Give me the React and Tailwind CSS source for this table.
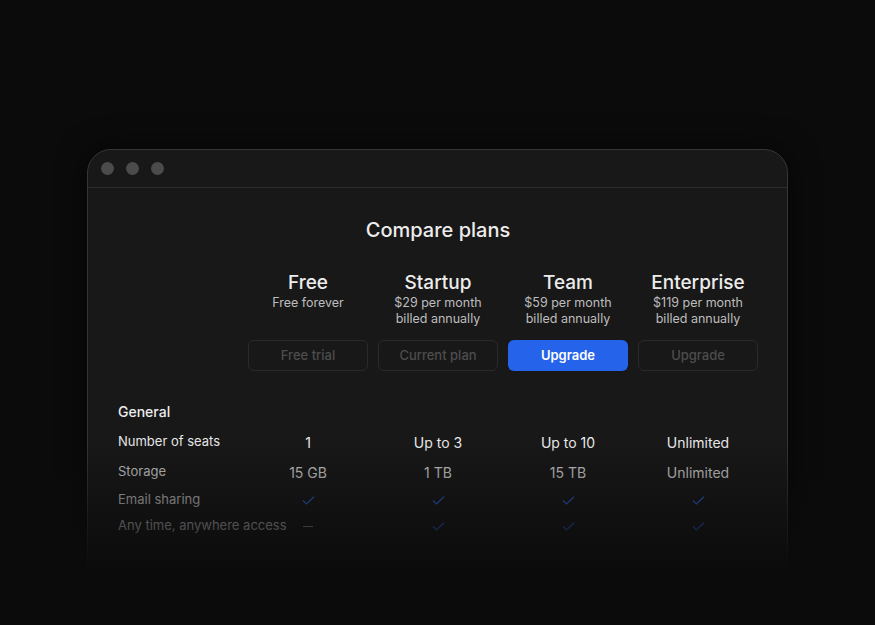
import React from "react";

const plans = [
  { name: "Free", price: "Free forever", billed: "", cta: "Free trial", primary: false },
  { name: "Startup", price: "$29 per month", billed: "billed annually", cta: "Current plan", primary: false },
  { name: "Team", price: "$59 per month", billed: "billed annually", cta: "Upgrade", primary: true },
  { name: "Enterprise", price: "$119 per month", billed: "billed annually", cta: "Upgrade", primary: false },
];

const rows = [
  { label: "Number of seats", values: ["1", "Up to 3", "Up to 10", "Unlimited"], h: "h-[30px]", strong: true },
  { label: "Storage", values: ["15 GB", "1 TB", "15 TB", "Unlimited"], h: "h-[30px]" },
  { label: "Email sharing", values: [true, true, true, true], h: "h-[26px]" },
  { label: "Any time, anywhere access", values: [false, true, true, true], h: "h-[26px]" },
];

function Check() {
  return (
    <svg width="13" height="9" viewBox="0 0 13 9" fill="none">
      <path d="M1 4.5L4.5 8L12 0.8" stroke="#2f63d8" strokeWidth="1.2" />
    </svg>
  );
}

function Cell({ value }) {
  if (value === true) return <Check />;
  if (value === false) return <span className="block w-[10px] h-px bg-[#9a9a9a]" />;
  return value;
}

export default function App() {
  return (
    <div
      className="relative min-h-screen h-[625px] overflow-hidden bg-[#0b0b0b] flex justify-center pt-[149px]"
      style={{ fontFamily: "Inter, 'Noto Sans', sans-serif" }}
    >
      <div className="w-[701px] h-[520px] rounded-t-[24px] border border-[#363636] bg-[#181818] shadow-[0_0_30px_rgba(0,0,0,0.6)]">
        {/* title bar */}
        <div className="h-[38px] border-b border-[#2c2c2c] flex items-center gap-3 pl-[13px]">
          <span className="w-[13px] h-[13px] rounded-full bg-[#4b4b4b]" />
          <span className="w-[13px] h-[13px] rounded-full bg-[#4b4b4b]" />
          <span className="w-[13px] h-[13px] rounded-full bg-[#4b4b4b]" />
        </div>

        <div className="pt-[28px] pl-[29px]">
          <h1 className="text-center pr-[28px] text-[20px] leading-[28px] font-medium text-[#ececec]">
            Compare plans
          </h1>

          <div className="mt-[27px] grid grid-cols-[126px_repeat(4,130px)]">
            <div />
            {plans.map((p) => (
              <div key={p.name} className="flex flex-col items-center">
                <div className="text-[19px] leading-[24px] font-medium text-[#ececec]">{p.name}</div>
                <div className="h-[32px] text-[12.5px] leading-[16px] text-[#bdbdbd] text-center">
                  {p.price}
                  <br />
                  {p.billed}
                </div>
                <button
                  className={
                    p.primary
                      ? "mt-[13px] w-[120px] h-[31px] rounded-md bg-[#2563eb] text-white text-[13px] font-semibold"
                      : "mt-[13px] w-[120px] h-[31px] rounded-md border border-[#2a2a2a] text-[#4d4d4d] text-[13px] font-medium"
                  }
                >
                  {p.cta}
                </button>
              </div>
            ))}
          </div>

          <div className="mt-[31px] pl-px text-[14px] leading-[20px] font-medium text-[#ececec]">General</div>

          <div className="mt-[5px]">
            {rows.map((r) => (
              <div key={r.label} className={`grid grid-cols-[126px_repeat(4,130px)] items-center ${r.h}`}>
                <div className={`pl-px text-[13px] whitespace-nowrap ${r.strong ? "text-[#e8e8e8]" : "text-[#cfcfcf]"}`}>
                  {r.label}
                </div>
                {r.values.map((v, i) => (
                  <div
                    key={i}
                    className={`flex justify-center text-[14px] ${r.strong ? "text-[#ececec]" : "text-[#cfcfcf]"}`}
                  >
                    <Cell value={v} />
                  </div>
                ))}
              </div>
            ))}
          </div>
        </div>
      </div>

      {/* bottom fade */}
      <div className="pointer-events-none absolute inset-x-0 top-[440px] bottom-0 bg-gradient-to-b from-transparent to-[#0b0b0b] to-[130px]" />
    </div>
  );
}
